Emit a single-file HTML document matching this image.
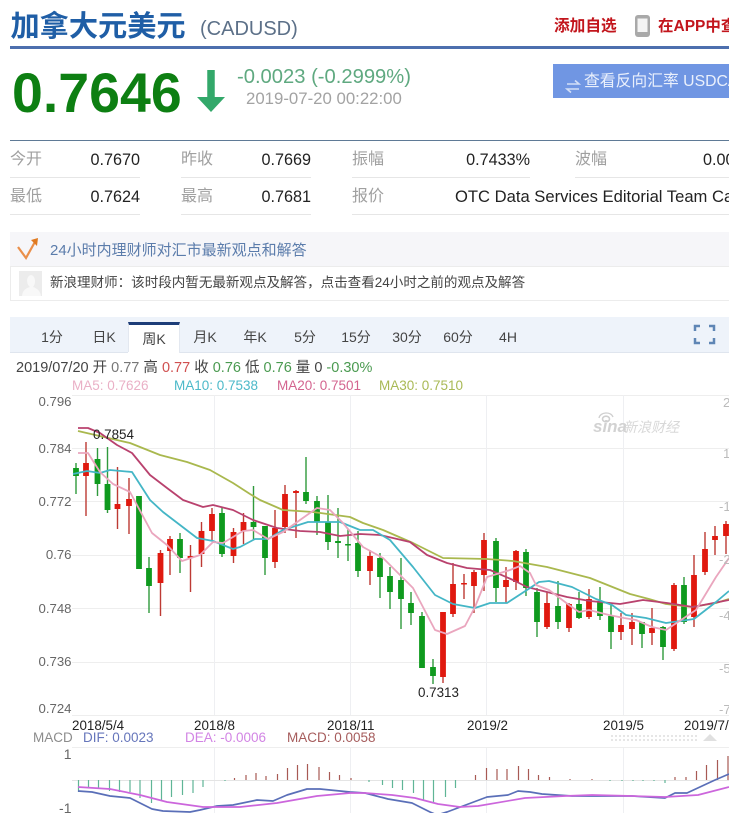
<!DOCTYPE html>
<html lang="zh"><head><meta charset="utf-8"><title>加拿大元美元</title>
<style>
html,body{margin:0;padding:0;background:#fff}
#p{position:relative;width:729px;height:813px;overflow:hidden;background:#fff;font-family:"Liberation Sans","Noto Sans CJK SC",sans-serif;filter:blur(.3px)}
#p div,#p span.a{position:absolute;white-space:nowrap}
.l{color:#a0a0a0;font-size:16px;line-height:20px}
.v{color:#222;font-size:16.2px;line-height:20px;text-align:right}
.h{height:1px;background:#e6e6e6}
.t{font-size:14px;line-height:18px;color:#444;transform:translateX(-50%)}
svg{position:absolute;left:0;top:0}
</style></head><body><div id="p">
<div style="left:10.500px;top:8px;font-size:29.200px;line-height:38px;font-weight:700;color:#1f5ea6">加拿大元美元</div>
<div style="left:200px;top:17px;font-size:20px;line-height:24px;color:#5c7088">(CADUSD)</div>
<div style="left:10px;top:46px;width:719px;height:3px;background:#4d6fae"></div>
<div style="left:554px;top:16px;font-size:15.700px;line-height:22px;font-weight:700;color:#c2151c">添加自选</div>
<div style="left:658px;top:16px;font-size:15.500px;line-height:22px;font-weight:700;color:#c2151c">在APP中查看</div>
<div style="left:12px;top:61px;font-size:55.500px;line-height:64px;font-weight:700;color:#0d7f12">0.7646</div>
<div style="left:237px;top:65px;font-size:20.200px;line-height:24px;color:#5fa980">-0.0023 (-0.2999%)</div>
<div style="left:246px;top:89px;font-size:16.800px;line-height:20px;color:#a3a3a3">2019-07-20 00:22:00</div>
<div style="left:553px;top:64px;width:176px;height:34px;background:#7096e3;overflow:hidden"><div style="left:31px;top:7px;font-size:15.800px;line-height:22px;color:#eaf0fc">查看反向汇率 USDCAD</div></div>
<div style="left:10px;top:140px;width:719px;height:1px;background:#5f7a96"></div>

<div class="l" style="left:10px;top:150px">今开</div><div class="v" style="left:60px;width:80px;top:149.500px">0.7670</div>
<div class="l" style="left:181px;top:150px">昨收</div><div class="v" style="left:231px;width:80px;top:149.500px">0.7669</div>
<div class="l" style="left:352px;top:150px">振幅</div><div class="v" style="left:450px;width:80px;top:149.500px">0.7433%</div>
<div class="l" style="left:575px;top:150px">波幅</div><div class="v" style="left:703px;top:149.500px;text-align:left">0.00%</div>
<div class="h" style="left:10px;width:130px;top:177px"></div><div class="h" style="left:181px;width:130px;top:177px"></div><div class="h" style="left:352px;width:178px;top:177px"></div><div class="h" style="left:575px;width:154px;top:177px"></div>
<div class="l" style="left:10px;top:187px">最低</div><div class="v" style="left:60px;width:80px;top:186.500px">0.7624</div>
<div class="l" style="left:181px;top:187px">最高</div><div class="v" style="left:231px;width:80px;top:186.500px">0.7681</div>
<div class="l" style="left:352px;top:187px">报价</div><div class="v" style="left:455px;top:186.500px;text-align:left;font-size:16.600px">OTC Data Services Editorial Team Canada</div>
<div class="h" style="left:10px;width:130px;top:214px"></div><div class="h" style="left:181px;width:130px;top:214px"></div><div class="h" style="left:352px;width:377px;top:214px"></div>

<div style="left:10px;top:232px;width:719px;height:34px;background:#f6f6f9"></div>
<div style="left:50px;top:241px;font-size:15px;line-height:20px;color:#5b7cab">24小时内理财师对汇市最新观点和解答</div>
<div style="left:10px;top:266px;width:719px;height:33px;border:1px solid #ececec;border-right:0;box-sizing:content-box"></div>
<div style="left:19px;top:271px;width:23px;height:25px;background:#ececec"></div>
<div style="left:50px;top:274px;font-size:13.540px;line-height:18px;color:#444">新浪理财师：该时段内暂无最新观点及解答，点击查看24小时之前的观点及解答</div>

<div style="left:10px;top:317px;width:719px;height:35px;background:#eef3fa;border-bottom:1px solid #dfe5ee"></div>
<div style="left:128px;top:322px;width:50px;height:28px;background:#fff;border-top:3px solid #1d3d78;border-left:1px solid #e3e8f0;border-right:1px solid #e3e8f0;box-sizing:content-box;height:28px;padding-bottom:0"></div>
<div style="left:128px;top:352px;width:51px;height:2px;background:#fff"></div>
<div class="t" style="left:52px;top:328px">1分</div><div class="t" style="left:104px;top:328px">日K</div><div class="t" style="left:154px;top:330px">周K</div><div class="t" style="left:205px;top:328px">月K</div><div class="t" style="left:255px;top:328px">年K</div><div class="t" style="left:305px;top:328px">5分</div><div class="t" style="left:356px;top:328px">15分</div><div class="t" style="left:407px;top:328px">30分</div><div class="t" style="left:458px;top:328px">60分</div><div class="t" style="left:508px;top:328px">4H</div>

<div style="left:16px;top:359px;font-size:14.500px;line-height:18px;color:#444">2019/07/20 开 <span style="color:#777">0.77</span> 高 <span style="color:#d05050">0.77</span> 收 <span style="color:#4a9a50">0.76</span> 低 <span style="color:#4a9a50">0.76</span> 量 0 <span style="color:#4a9a50">-0.30%</span></div>
<div style="left:72px;top:377px;font-size:13.500px;line-height:18px;color:#eab0c6">MA5: 0.7626</div>
<div style="left:174px;top:377px;font-size:13.500px;line-height:18px;color:#4cb9c9">MA10: 0.7538</div>
<div style="left:277px;top:377px;font-size:13.500px;line-height:18px;color:#d3648f">MA20: 0.7501</div>
<div style="left:379px;top:377px;font-size:13.500px;line-height:18px;color:#a9b955">MA30: 0.7510</div>

<svg width="729" height="813" viewBox="0 0 729 813" fill="none">
<!-- icons -->
<path d="M211 70V100" stroke="#33a86a" stroke-width="7.500"/><path d="M197 97H225L211 112Z" fill="#33a86a"/>
<rect x="635" y="15" width="15" height="22" rx="3" fill="#a9a9a9"/><rect x="637.500" y="18.500" width="10" height="13.500" fill="#f4f4f4"/>
<path d="M567 84H579L575 80.500M579 89H567L571 92.500" stroke="#d3dff7" stroke-width="1.600"/>
<path d="M18 247L26 258L36 240" stroke="#ea8f4a" stroke-width="2.200"/><path d="M31 240L38 238L37 246Z" fill="#e07a20"/>
<path d="M22 296C23 289 27 288 30 287C26 284 26 276 31 275C36 276 36 284 33 287C36 288 40 290 41 296Z" fill="#f8f8f8"/>
<path d="M695 331V326H700M709 326H714V331M695 338V343H700M709 343H714V338" stroke="#5f86b5" stroke-width="2.500"/>

<!-- grid -->
<path d="M72 395.500H729M72 448.500H729M72 501.500H729M72 555.500H729M72 608.500H729M72 662.500H729M72 715.500H729" stroke="#eeeeee"/>
<path d="M214.500 395V715M350.500 395V715M486.500 395V715M623.500 395V715M214.500 747V813M350.500 747V813M486.500 747V813M623.500 747V813" stroke="#eeeff2"/>
<path d="M72 747.500H729" stroke="#eeeeee"/><path d="M72 780.500H729" stroke="#e4e4e4"/>

<!-- watermark -->
<text x="593" y="432" font-family="Liberation Sans" font-size="17" font-weight="700" font-style="italic" fill="#d2d2d2">sina</text>
<text x="623" y="432" font-family="Noto Sans CJK SC" font-size="14" font-style="italic" fill="#d8d8d8">新浪财经</text>
<ellipse cx="606" cy="419" rx="3.500" ry="2.800" stroke="#cfcfcf" stroke-width="1.600"/><path d="M599 418C600 412 611 411 613 417" stroke="#cfcfcf" stroke-width="1.300"/>

<!-- green wicks -->
<path stroke="#2f9a3c" stroke-width="1.400" d="M76 463V494M97.500 448V496M107.500 447V513M139 496V569M149 557V613M180 533V573M222 507V557M253.500 486V540M265 526V575M306 457V504M317 496V535M328 495V550M338 508V558M348 529V561M358 531V577M380 553V598M390 567V609M401 558V629M411 592V625M422 612V668M433 659V684M496 538V602M526 549V596M537 588V637M558 581V629M579 592V619M600 587V620M611 603V649M642 622V648M663 626V660M684 577V624"/>
<!-- red wicks -->
<path stroke="#bd3a34" stroke-width="1.400" d="M86 442V516M117.500 467V529M129 478V534M160.500 550V616M170 536V575M190.500 545V592M201.500 522V567M212 508V540M233.500 528V563M243.500 513V544M275 510V568M285 485V533M296 490V538M370 550V585M443 612V683M453 563V617M464 574V599M474 570V613M484 533V591M506 567V603M516 550V590M547 592V629M569 603V632M589 589V619M621 613V640M632 613V645M652 608V645M674 583V651M694 555V627M705 532V575M715 526V555M726 521V554"/>
<!-- green bodies -->
<path stroke="#0f9a1e" stroke-width="5.800" d="M76 468V476M97.500 459V484M107.500 484V510M139 496V569M149 568V586M180 539V558M222 513V554M253.500 522V527M265 526V558M306 492V501M317 501V522M328 522V542M338 541V543M348 544V545.500M358 543V571M380 558V577M390 576V592M401 580V599M411 603V613M422 616V668M433 667V676M496 541V588M526 552V588M537 592V622M558 606V622M579 604V618M600 602V616M611 616V632M642 622V634M663 627V647M684 585V622"/>
<!-- red bodies -->
<path stroke="#e0190f" stroke-width="5.800" d="M86 463V476M117.500 504V509M129 499V506M160.500 553V583M170 539V551M190.500 556V558M201.500 531V554M212 514V531M233.500 532V556M243.500 522V531M275 528V562M285 494V527M296 491V493M370 556V571M443 612V677M453 584V614M464 583V584.500M474 572V586M484 540V575M506 580V587M516 551V582M547 603V627M569 604V628M589 599V617M621 625V632M632 622V629M652 628V633M674 585V649M694 575V617M705 549V572M715 536V540M726 524V536"/>

<!-- MA lines -->
<g stroke-width="1.800" stroke-linejoin="round">
<path stroke="#a9b84e" d="M78 431L130 443L160 455L187 462L210 470L233 483L250 494L260 500L283 510L313 512L350 517L363 523L383 530L413 543L443 558L487 559L513 561L547 567L590 578L630 594L649 599L666 604L692 607L716 603L729 599"/>
<path stroke="#b9426e" d="M78 428L88 428L100 433L117 445L132 453L150 475L167 488L183 500L203 507L213 505L233 510L253 520L277 528L300 531L320 532L340 536L360 534L380 535L410 542L427 555L447 563L467 568L490 570L513 580L527 587L547 592L567 597L590 601L620 604L643 600L667 603L693 607L729 600"/>
<path stroke="#44b6c6" d="M73 474L87 471L100 473L110 470L132 472L150 500L163 512L180 525L197 538L213 541L233 549L240 547L255 539L268 539L283 530L308 522L340 522L360 530L373 530L390 540L413 567L435 595L453 604L475 608L490 603L507 603L530 588L539 582L549 581L572 587L596 599L612 605L626 615L646 618L666 623L694 619L716 602L729 591"/>
<path stroke="#eaa6be" d="M78 453L88 453L100 472L113 484L130 492L152 533L167 545L182 561L200 555L213 542L223 543L243 531L253 530L268 539L283 532L317 508L330 510L343 523L363 547L383 558L413 588L435 630L447 634L465 626L475 607L487 577L510 570L520 566L530 573L536 585L549 590L569 605L579 612L589 610L609 615L624 618L636 620L652 627L666 630L696 610L716 577L729 558"/>
</g>

<!-- MACD histogram -->
<path stroke="#5fb596" stroke-width="1.200" d="M78.500 780V792M88.500 780V788M98.500 780V788M109.500 780V791M119.500 780V792M130 780V792M140 780V798M151.500 780V803M161.500 780V801M171.500 780V797M182.500 780V795M193 780V793M203 780V787M225 780V781M369 780V782M382.500 780V785M392.500 780V788M402.500 780V790M413.500 780V793M423.500 780V800M433.500 780V803M445.500 780V797M455.500 780V788M610 780V781M622 780V781M633 780V781M643 780V781M654 780V781M665 780V783"/>
<path stroke="#a85a54" stroke-width="1.200" d="M234.500 778V780M246 775V780M256 773V780M266 776V780M277.500 774V780M287.500 768V780M297.500 765V780M307.500 764V780M319 767V780M329.500 772V780M339.500 775V780M351 778V780M475.500 775V780M486.500 768V780M497 769V780M507 769V780M518.500 766V780M528.500 769V780M538.500 775V780M549.500 777V780M570 779V780M592 779V780M675 777V780M686 777V780M696.500 771V780M706.500 765V780M717.500 760V780M728 756V780"/>
<!-- MACD lines -->
<path stroke="#5a6fb8" stroke-width="1.700" stroke-linejoin="round" d="M78 791L92 792L110 796L130 798L152 809L163 811L190 812L200 810L217 806L233 805L257 800L273 801L287 795L307 789L320 789L350 792L365 793L388 799L412 803L430 812L437 815L447 812L487 797L508 795L518 791L530 792L542 794L572 796L632 796L665 798L675 793L687 793L715 780L729 774"/>
<path stroke="#cc66dc" stroke-width="1.700" stroke-linejoin="round" d="M78 787L110 789L140 795L167 802L203 807L240 807L277 803L317 796L350 793L365 793L392 795L415 798L438 804L460 807L478 806L525 798L565 796L592 795L632 796L665 797L698 795L729 787"/>

<!-- slider -->
<path d="M611 736H699M611 740H699" stroke="#e6e6e6" stroke-width="2" stroke-dasharray="2 2"/>
<path d="M703 741L710 734L717 741Z" fill="#e0e0e0"/>

<!-- axis labels -->
<g font-family="Liberation Sans" font-size="13.200" fill="#666" text-anchor="end">
<text x="71.500" y="406">0.796</text><text x="71.500" y="453">0.784</text><text x="71.500" y="506">0.772</text><text x="71.500" y="559">0.76</text><text x="71.500" y="613">0.748</text><text x="71.500" y="666">0.736</text><text x="71.500" y="713">0.724</text>
<text x="71.500" y="759" font-size="14">1</text><text x="71.500" y="813" font-size="14">-1</text>
</g>
<g font-family="Liberation Sans" font-size="13.200" fill="#bbb">
<text x="723" y="407">2</text><text x="723" y="458">1</text><text x="719" y="511">-1</text><text x="719" y="564">-2</text><text x="719" y="620">-4</text><text x="719" y="673">-5</text><text x="719" y="714">-7</text>
</g>
<g font-family="Liberation Sans" font-size="13.400" fill="#222">
<text x="72" y="730">2018/5/4</text><text x="194" y="730">2018/8</text><text x="327" y="730">2018/11</text><text x="467" y="730">2019/2</text><text x="603" y="730">2019/5</text><text x="684" y="730">2019/7/19</text>
<text x="93" y="439">0.7854</text><text x="418" y="697">0.7313</text>
</g>
<g font-family="Liberation Sans" font-size="13.500">
<text x="33" y="742" fill="#8c8c8c">MACD</text><text x="83" y="742" fill="#6676bb">DIF: 0.0023</text><text x="185" y="742" fill="#d284e4">DEA: -0.0006</text><text x="287" y="742" fill="#a65c5c">MACD: 0.0058</text>
</g>
</svg>
</div></body></html>
